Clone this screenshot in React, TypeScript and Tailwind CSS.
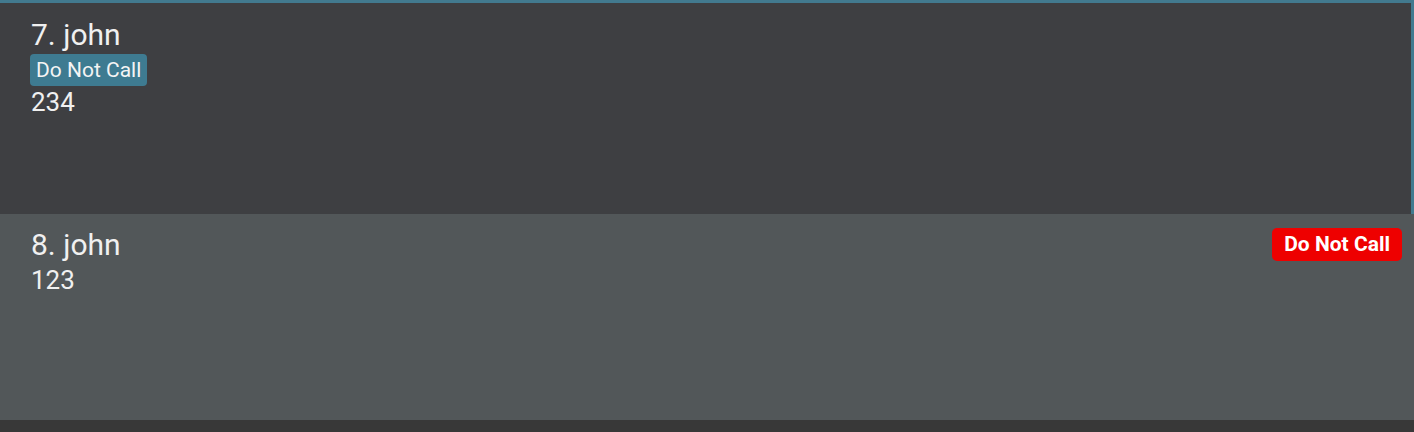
import React from "react";

export default function App() {
  const font = { fontFamily: 'Roboto, "Noto Sans", sans-serif' };
  return (
    <div className="w-[1414px] h-[432px] bg-[#383838] flex flex-col overflow-hidden" style={font}>
      <div className="h-[214px] shrink-0 bg-[#3e3f42] border-t-[3px] border-r-[3px] border-[#427a8f] pl-[31px] pt-[14px] flex flex-col items-start">
        <div className="text-[30px] leading-[35px] text-[#f0f0f0]">7. john</div>
        <div className="mt-[2px] -ml-[1px] bg-[#3e7b91] text-[#f4f4f4] text-[21px] leading-[24px] px-[6px] py-[4px] rounded-[4px]">Do Not Call</div>
        <div className="text-[26px] leading-[32px] text-[#f0f0f0]">234</div>
      </div>
      <div className="h-[206px] shrink-0 bg-[#525759] pl-[31px] pr-[12px] pt-[11px] flex justify-between items-start">
        <div className="flex flex-col">
          <div className="text-[30px] leading-[40px] text-[#f0f0f0]">8. john</div>
          <div className="text-[26px] leading-[32px] text-[#f0f0f0] -mt-[1px]">123</div>
        </div>
        <div className="mt-[3px] bg-[#ee0000] text-white font-bold text-[21px] leading-[25px] px-[12px] py-[4px] rounded-[5px]">Do Not Call</div>
      </div>
    </div>
  );
}
